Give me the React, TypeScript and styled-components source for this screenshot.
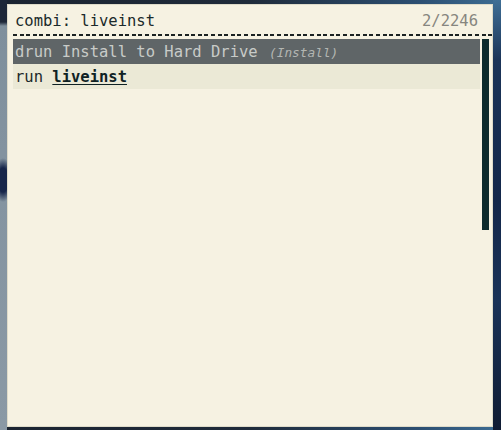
import React from 'react';
import styled, { createGlobalStyle } from 'styled-components';

const Global = createGlobalStyle`
  html, body {
    margin: 0;
    padding: 0;
    width: 501px;
    height: 430px;
    overflow: hidden;
  }
  body {
    font-family: "DejaVu Sans Mono", "Liberation Mono", monospace;
    background: #1c2a3c;
  }
`;

const Desktop = styled.div`
  width: 501px;
  height: 430px;
  box-sizing: border-box;
  padding: 4px 0 0 7px;
  background:
    radial-gradient(ellipse 10px 22px at 3px 180px, #17264a 0%, #17264a 55%, rgba(23,38,74,0) 100%),
    linear-gradient(to bottom, #1d2738 0px, #1d2738 22px, #7e8f9c 26px, #8393a0 150px, #8a99a5 430px) left top / 7px 430px no-repeat,
    linear-gradient(to bottom, #3f6f96 0px, #1b3458 60px, #13274a 200px, #1a3358 300px, #101c33 430px) right top / 8px 430px no-repeat,
    linear-gradient(to right, #1b2431 0px, #1f2b3a 250px, #2c4f72 420px, #3d6d93 501px);
`;

const Window = styled.div`
  width: 486px;
  height: 423px;
  box-sizing: border-box;
  background: #f6f2e2;
  border: 1px solid #dedbc9;
  padding: 6px 3px 5px 5px;
  display: flex;
  flex-direction: column;
  color: #1b2a2b;
  font-size: 15.5px;
`;

const InputBar = styled.div`
  display: flex;
  align-items: baseline;
  line-height: 20px;
  padding: 0 11px 3px 2px;
  white-space: pre;
`;

const Prompt = styled.span`
  color: #1b2a2b;
`;

const Entry = styled.span`
  flex: 1;
  color: #1b2a2b;
`;

const Counter = styled.span`
  color: #86867f;
`;

const Dashes = styled.div`
  height: 2px;
  margin-right: -4px;
  background: repeating-linear-gradient(to right, #1b2222 0px, #1b2222 4px, transparent 4px, transparent 6.6px);
`;

const ListArea = styled.div`
  flex: 1;
  display: flex;
  gap: 2px;
  padding-top: 3px;
  min-height: 0;
`;

const List = styled.div`
  flex: 1;
  display: flex;
  flex-direction: column;
`;

const Row = styled.div<{ $variant: 'selected' | 'alt' | 'normal' }>`
  height: 25px;
  box-sizing: border-box;
  padding: 3px 2px 2px;
  line-height: 20px;
  white-space: pre;
  background: ${(p) =>
    p.$variant === 'selected' ? '#5f6567' : p.$variant === 'alt' ? '#ebe9d6' : 'transparent'};
  color: ${(p) => (p.$variant === 'selected' ? '#c8cbc8' : '#1b2a2b')};
`;

const Hint = styled.span`
  font-style: italic;
  font-size: 12.8px;
  margin-left: 2px;
  color: #b3b6b2;
`;

const Match = styled.span`
  font-weight: bold;
  text-decoration: underline;
  text-underline-offset: 2px;
  color: #0f2224;
`;

const ScrollTrack = styled.div`
  width: 7px;
  display: flex;
  flex-direction: column;
`;

const ScrollHandle = styled.div`
  background: #0c2b2d;
`;

export default function App() {
  return (
    <>
      <Global />
      <Desktop>
        <Window>
          <InputBar>
            <Prompt>combi:</Prompt>
            <Entry> liveinst</Entry>
            <Counter>2/2246</Counter>
          </InputBar>
          <Dashes />
          <ListArea>
            <List>
              <Row $variant="selected">
                drun Install to Hard Drive <Hint>(Install)</Hint>
              </Row>
              <Row $variant="alt">
                run <Match>liveinst</Match>
              </Row>
            </List>
            <ScrollTrack>
              <ScrollHandle style={{ height: '50%' }} />
            </ScrollTrack>
          </ListArea>
        </Window>
      </Desktop>
    </>
  );
}
